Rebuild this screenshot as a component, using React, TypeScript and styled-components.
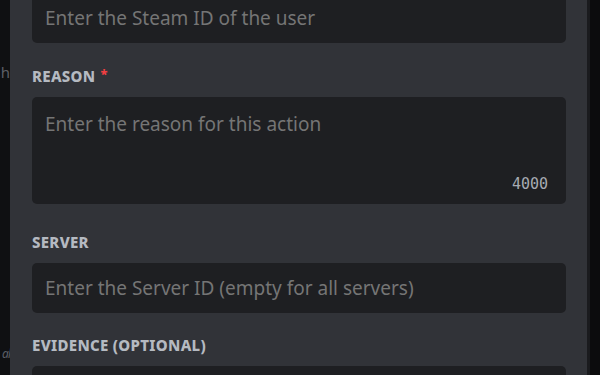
import styled, { createGlobalStyle } from 'styled-components';

const GlobalStyle = createGlobalStyle`
  html, body {
    margin: 0;
    padding: 0;
    background: #0e0f10;
    overflow: hidden;
  }
`;

const Page = styled.div`
  display: flex;
  width: 600px;
  height: 375px;
  overflow: hidden;
  font-family: 'Noto Sans', 'Open Sans', sans-serif;
`;

const Backdrop = styled.div`
  width: 10px;
  flex-shrink: 0;
  display: flex;
  flex-direction: column;
  align-items: flex-end;
  overflow: hidden;
  background: #0f1012;
  color: #5c5f66;
  font-size: 15px;
`;

const Peek = styled.span<{ $top: number; $italic?: boolean }>`
  margin-top: ${(p) => p.$top}px;
  white-space: nowrap;
  font-style: ${(p) => (p.$italic ? 'italic' : 'normal')};
  font-size: ${(p) => (p.$italic ? '12px' : '15px')};
  letter-spacing: ${(p) => (p.$italic ? '-1px' : '0')};
  line-height: 20px;
`;

const ScrollEdge = styled.div`
  width: 13px;
  flex-shrink: 0;
  box-sizing: border-box;
  border-left: 3px solid #1a1b1e;
  background: #0c0c0d;
`;

const Modal = styled.div`
  flex: 1;
  background: #313338;
  padding: 0 21px 0 22px;
`;

const Form = styled.div`
  display: flex;
  flex-direction: column;
  margin-top: -7px;
`;

const Field = styled.div<{ $gap: number }>`
  display: flex;
  flex-direction: column;
  margin-bottom: ${(p) => p.$gap}px;
`;

const Label = styled.label`
  display: flex;
  align-items: flex-start;
  gap: 5px;
  color: #b5bac1;
  font-size: 15px;
  font-weight: 800;
  line-height: 18px;
  letter-spacing: 0.02em;
  text-transform: uppercase;
  margin-bottom: 12px;
`;

const Required = styled.span`
  color: #f23f42;
  font-size: 13px;
  line-height: 14px;
`;

const Input = styled.input`
  height: 50px;
  box-sizing: border-box;
  border: none;
  outline: none;
  border-radius: 5px;
  background: #1e1f22;
  padding: 0 13px;
  font-family: inherit;
  font-size: 19px;
  color: #dbdee1;

  ::placeholder {
    color: #878a8f;
    opacity: 1;
  }
`;

const AreaWrap = styled.div`
  position: relative;
  height: 107px;
  border-radius: 5px;
  background: #1e1f22;
`;

const Area = styled.textarea`
  width: 100%;
  height: 100%;
  box-sizing: border-box;
  resize: none;
  border: none;
  outline: none;
  background: transparent;
  padding: 14px 13px;
  font-family: inherit;
  font-size: 19px;
  line-height: 26px;
  color: #dbdee1;

  ::placeholder {
    color: #878a8f;
    opacity: 1;
  }
`;

const Counter = styled.span`
  position: absolute;
  right: 18px;
  bottom: 11px;
  font-family: 'DejaVu Sans Mono', monospace;
  font-size: 15px;
  color: #a7abb2;
`;

export default function App() {
  return (
    <>
      <GlobalStyle />
      <Page>
        <Backdrop>
          <Peek $top={62}>h</Peek>
          <Peek $top={262} $italic>al</Peek>
        </Backdrop>
        <Modal>
          <Form>
            <Field $gap={24}>
              <Input placeholder="Enter the Steam ID of the user" />
            </Field>
            <Field $gap={29}>
              <Label>
                Reason <Required>*</Required>
              </Label>
              <AreaWrap>
                <Area placeholder="Enter the reason for this action" />
                <Counter>4000</Counter>
              </AreaWrap>
            </Field>
            <Field $gap={23}>
              <Label>Server</Label>
              <Input placeholder="Enter the Server ID (empty for all servers)" />
            </Field>
            <Field $gap={24}>
              <Label>Evidence (optional)</Label>
              <Input placeholder="" />
            </Field>
          </Form>
        </Modal>
        <ScrollEdge />
      </Page>
    </>
  );
}
